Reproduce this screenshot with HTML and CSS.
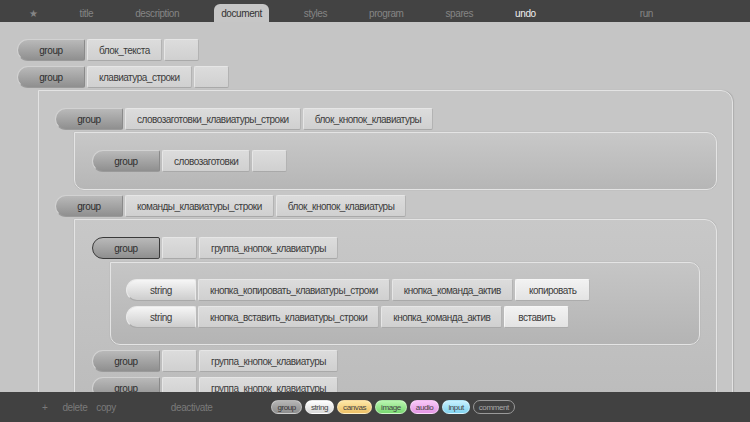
FILE: index.html
```html
<!DOCTYPE html>
<html lang="ru">
<head>
<meta charset="utf-8">
<title>document</title>
<link rel="stylesheet" href="styles.css">
</head>
<body>
<div class="app">
  <nav class="tabs">
    <span class="tab">★</span>
    <span class="tab">title</span>
    <span class="tab">description</span>
    <span class="tab active">document</span>
    <span class="tab">styles</span>
    <span class="tab">program</span>
    <span class="tab">spares</span>
    <span class="tab bright">undo</span>
    <span class="tab run">run</span>
  </nav>

  <main class="doc">
    <div class="row"><span class="pill group">group</span><span class="cell">блок_текста</span><span class="cell empty"></span></div>
    <div class="row"><span class="pill group">group</span><span class="cell">клавиатура_строки</span><span class="cell empty"></span></div>

    <div class="box b1">
      <div class="row"><span class="pill group">group</span><span class="cell">словозаготовки_клавиатуры_строки</span><span class="cell">блок_кнопок_клавиатуры</span></div>
      <div class="box b2">
        <div class="row"><span class="pill group">group</span><span class="cell">словозаготовки</span><span class="cell empty"></span></div>
      </div>
      <div class="row"><span class="pill group">group</span><span class="cell">команды_клавиатуры_строки</span><span class="cell">блок_кнопок_клавиатуры</span></div>
      <div class="box b3">
        <div class="row"><span class="pill group selected">group</span><span class="cell empty"></span><span class="cell">группа_кнопок_клавиатуры</span></div>
        <div class="box b4">
          <div class="row"><span class="pill string">string</span><span class="cell">кнопка_копировать_клавиатуры_строки</span><span class="cell">кнопка_команда_актив</span><span class="cell value">копировать</span></div>
          <div class="row"><span class="pill string">string</span><span class="cell">кнопка_вставить_клавиатуры_строки</span><span class="cell">кнопка_команда_актив</span><span class="cell value">вставить</span></div>
        </div>
        <div class="row"><span class="pill group">group</span><span class="cell empty"></span><span class="cell">группа_кнопок_клавиатуры</span></div>
        <div class="row"><span class="pill group">group</span><span class="cell empty"></span><span class="cell">группа_кнопок_клавиатуры</span></div>
      </div>
    </div>
  </main>

  <footer class="bar">
    <span class="act plus">+</span>
    <span class="act del">delete</span>
    <span class="act copy">copy</span>
    <span class="act deact">deactivate</span>
    <span class="chips">
      <span class="chip c-group">group</span>
      <span class="chip c-string">string</span>
      <span class="chip c-canvas">canvas</span>
      <span class="chip c-image">image</span>
      <span class="chip c-audio">audio</span>
      <span class="chip c-input">input</span>
      <span class="chip c-comment">comment</span>
    </span>
  </footer>
</div>
</body>
</html>
```

FILE: styles.css
```css
* { box-sizing: border-box; }
html, body { margin: 0; padding: 0; }
body {
  width: 750px;
  height: 422px;
  overflow: hidden;
  font-family: "Liberation Sans", Arial, sans-serif;
  letter-spacing: -0.4px;
  background: #c5c5c5;
}
.app {
  display: flex;
  flex-direction: column;
  width: 750px;
  height: 422px;
}

/* top tabs */
.tabs {
  height: 22px;
  flex: none;
  background: #434343;
  display: flex;
  align-items: flex-end;
  padding-left: 8px;
}
.tab {
  height: 18px;
  padding: 0 7px;
  margin: 0 14px;
  font-size: 10px;
  line-height: 19px;
  color: #858585;
  border-radius: 6px 6px 0 0;
}
.tab.active {
  background: #c6c6c6;
  color: #333;
}
.tab.bright { color: #f0f0f0; }
.tab.run { margin-left: 76px; }

/* document area */
.doc {
  height: 370px;
  flex: none;
  overflow: hidden;
  padding: 17px 0 0 17px;
  display: flex;
  flex-direction: column;
  background: #c5c5c5;
}
.box {
  display: flex;
  flex-direction: column;
  flex: none;
}
.row {
  display: flex;
  gap: 2px;
  height: 22px;
  flex: none;
}
.row + .row { margin-top: 5px; }
.row + .box { margin-top: 2px; }
.box + .row { margin-top: 5px; }

.pill, .cell {
  height: 22px;
  display: flex;
  align-items: center;
  justify-content: center;
  font-size: 10px;
  color: #3c3c3c;
  white-space: nowrap;
}
.pill {
  width: 68px;
  border-radius: 11px 2px 2px 11px;
  border: 1px solid #d2d2d2;
  border-bottom-color: #9a9a9a;
  border-right-color: #8a8a8a;
}
.pill.group {
  background: linear-gradient(#b9b9b9, #8f8f8f);
  color: #2e2e2e;
}
.pill.group.selected {
  border: 1px solid #3a3a3a;
}
.pill.string {
  width: 70px;
  background: linear-gradient(#f6f6f6, #cdcdcd);
  border-color: #eaeaea;
  border-bottom-color: #aaa;
}
.cell {
  padding: 0 11px;
  letter-spacing: -0.5px;
  border-radius: 2px;
  background: linear-gradient(#dcdcdc, #d0d0d0);
  border: 1px solid #e6e6e6;
  border-bottom-color: #a9a9a9;
  border-right-color: #b3b3b3;
}
.cell.empty { width: 35px; padding: 0; }
.cell.value {
  background: linear-gradient(#f2f2f2, #e3e3e3);
  border-color: #f6f6f6;
  border-bottom-color: #acacac;
  border-right-color: #b8b8b8;
  padding: 0 13px;
}

.b1 {
  margin-left: 21px;
  margin-right: 17px;
  padding: 17px 15px 0 16px;
  border: 1px solid #e3e3e3;
  border-radius: 0 12px 0 0;
  background: #c6c6c6;
  box-shadow: 1px 0 1px rgba(0,0,0,0.12);
}
.b2, .b3 {
  margin-left: 19px;
  padding: 17px 0 17px 17px;
  border: 1px solid #e4e4e4;
  box-shadow: 0 0 1px rgba(0,0,0,0.25);
}
.b2 {
  border-radius: 0 10px 10px 10px;
  background: linear-gradient(#c8c8c8, #b6b6b6);
}
.b3 {
  border-radius: 0 12px 0 0;
  background: linear-gradient(#c8c8c8, #bcbcbc);
  padding-bottom: 0;
}
.b3 > .row + .b4 { margin-top: 3px; }
.b4 {
  margin-left: 18px;
  margin-right: 16px;
  padding: 16px 0 16px 15px;
  border: 1px solid #e4e4e4;
  border-radius: 0 10px 10px 10px;
  background: linear-gradient(#c6c6c6, #b4b4b4);
  box-shadow: 0 0 1px rgba(0,0,0,0.25);
}

/* bottom bar */
.bar {
  height: 30px;
  flex: none;
  background: #414141;
  display: flex;
  align-items: center;
  padding-left: 42px;
  font-size: 10px;
  color: #7a7a7a;
}
.act { flex: none; }
.plus { margin-right: 15px; }
.del { margin-right: 9px; }
.copy { margin-right: 55px; }
.deact { margin-right: 59px; }
.chips {
  display: flex;
  gap: 3px;
  align-items: center;
}
.chip {
  height: 14px;
  padding: 0 5px;
  border-radius: 7px;
  font-size: 8px;
  line-height: 13px;
  color: #444;
  border: 1px solid rgba(255,255,255,0.35);
}
.c-group { background: linear-gradient(#b5b5b5, #8c8c8c); color: #333; }
.c-string { background: linear-gradient(#ffffff, #d8d8d8); }
.c-canvas { background: linear-gradient(#fde7a6, #eec166); }
.c-image { background: linear-gradient(#b9f5b0, #78d970); }
.c-audio { background: linear-gradient(#f8c8f8, #e596e5); }
.c-input { background: linear-gradient(#c7f1ff, #80d3ef); }
.c-comment {
  background: transparent;
  border: 1px solid #9a9a9a;
  color: #a8a8a8;
}
```
